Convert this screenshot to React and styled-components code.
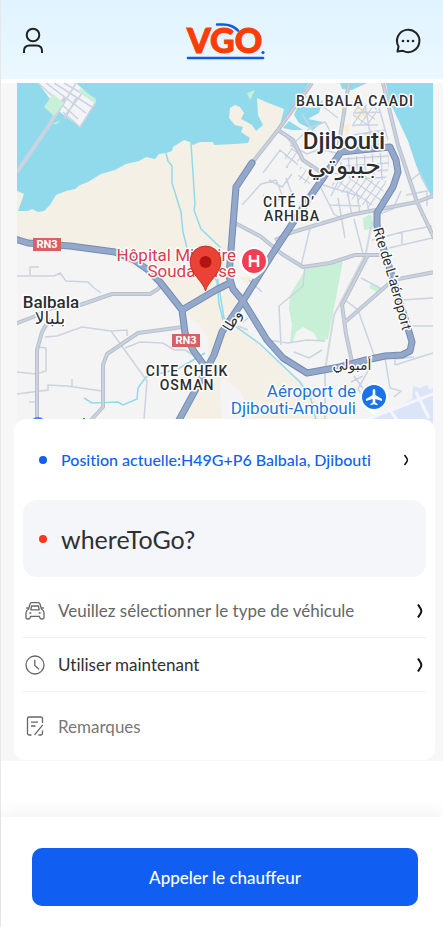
import { styled, createGlobalStyle } from 'styled-components';

const App = () => {
  return (
    <Page>
      <GlobalStyle />
      <Header>
        <IconButton aria-label="Profil">
          <UserIcon />
        </IconButton>
        <Logo />
        <IconButton aria-label="Messages">
          <ChatIcon />
        </IconButton>
      </Header>
      <Main>
        <CityMap />
        <Card>
          <LocationRow>
            <Dot $color="#105ff2" />
            <LocationText>
              Position actuelle:H49G+P6 Balbala, Djibouti
            </LocationText>
            <Chevron $thin viewBox="0 0 8 14">
              <path d="M2.5 2 L5 5.5 Q5.8 7 5 8.5 L2.5 12" />
            </Chevron>
          </LocationRow>
          <Destination>
            <Dot $color="#f9381c" />
            whereToGo?
          </Destination>
          <OptionRow $muted>
            <CarIcon />
            <OptionText>Veuillez sélectionner le type de véhicule</OptionText>
            <Chevron viewBox="0 0 8 14">
              <path d="M2 0.5 L4.8 5 Q5.8 7 4.8 9 L2 13.5" />
            </Chevron>
          </OptionRow>
          <OptionRow>
            <ClockIcon />
            <OptionText>Utiliser maintenant</OptionText>
            <Chevron viewBox="0 0 8 14">
              <path d="M2 0.5 L4.8 5 Q5.8 7 4.8 9 L2 13.5" />
            </Chevron>
          </OptionRow>
          <RemarkRow>
            <NoteIcon />
            <RemarkInput placeholder="Remarques" aria-label="Remarques" />
          </RemarkRow>
        </Card>
      </Main>
      <Footer>
        <CallButton>Appeler le chauffeur</CallButton>
      </Footer>
    </Page>
  );
};

export default App;

const Logo = () => (
  <LogoSvg viewBox="0 0 80 40" role="img" aria-label="VGO">
    <text x="1" y="32">
      VGO
    </text>
    <path d="M31 3.5 H37 Q46 3.5 52 9.5" strokeWidth="2.5" />
    <path d="M2 37 H77" strokeWidth="2.6" />
    <circle cx="77" cy="31.5" r="1.6" />
  </LogoSvg>
);

const UserIcon = () => (
  <LineIcon viewBox="0 0 28 28" $size={28} $color="#222" $stroke={2}>
    <circle cx="14" cy="8" r="6.3" />
    <path d="M5 26 V24 Q5 18.5 10.5 18.5 H17.5 Q23 18.5 23 24 V26" />
  </LineIcon>
);

const ChatIcon = () => (
  <LineIcon viewBox="0 0 28 28" $size={28} $color="#222" $stroke={2}>
    <path d="M3.5 24.5 L4.5 19.5 A11.2 11.2 0 1 1 9 23.8 Z" />
    <g fill="#222" stroke="none">
      <circle cx="9" cy="14" r="1.3" />
      <circle cx="14" cy="14" r="1.3" />
      <circle cx="19" cy="14" r="1.3" />
    </g>
  </LineIcon>
);

const CarIcon = () => (
  <LineIcon viewBox="0 0 20 20" $size={20} $color="#666" $stroke={1.3}>
    <path d="M3.6 8 L5 3 Q5.3 1.6 6.6 1.6 H13.4 Q14.7 1.6 15 3 L16.4 8 Q19 9.5 19 12 V16.5 Q19 18 17.5 18 H16.5 Q15.3 18 15 17 L14.4 15.3 H5.6 L5 17 Q4.7 18 3.5 18 H2.5 Q1 18 1 16.5 V12 Q1 9.5 3.6 8 Z" />
    <path d="M5.8 8.8 L6.6 5 H13.4 L14.2 8.8 Z M3.6 7 H1.2 M16.4 7 H18.8 M4.3 12 H6.3 M13.7 12 H15.7" />
  </LineIcon>
);

const ClockIcon = () => (
  <LineIcon viewBox="0 0 20 20" $size={20} $color="#666" $stroke={1.3}>
    <circle cx="10" cy="10" r="9" />
    <path d="M9.8 4.8 V10.5 L14 14.3" />
  </LineIcon>
);

const NoteIcon = () => (
  <LineIcon viewBox="0 0 20 20" $size={20} $color="#666" $stroke={1.3}>
    <path d="M17.5 7 V2.5 Q17.5 1 16 1 H4 Q2.5 1 2.5 2.5 V17.5 Q2.5 19 4 19 H6.5 M6 6.2 H13 M6 10 H10.5" />
    <path d="M9.5 18.8 L17.8 8.8 M13.5 19 H16 Q17.5 19 17.5 17.5 V14.5" />
  </LineIcon>
);

const MAIN_ROADS =
  'M15 239 L28 243 L70 246 L115 252 L134 260 L148 270 L160 282 L182 310 L185 333 L193 350 L206 368 M252 163 L236 187 L231 250 L229 276 L233 289 L243 301 M341 152 L312 194 L273 253 L243 301 L222 332 L214 355 L203 376 L178 422 M182 310 L216 290 L230 283 M243 301 L267 340 L283 358 L307 373 L340 367 L366 360 L385 356 L402 355 L410 351 L412 342 L407 325 L384 250 L377 225 L377 213 L393 187 L398 172 L396 160 L390 147 L380 148 L341 152';

const SIDE_ROADS =
  'M312 83 L278 130 L252 163 M278 130 L293 140 L303 160 L325 175 M383 83 L398 145 L417 202 L435 240 M349 83 L345 106 L338 150 M275 240 L293 232 L350 215 L417 202 L435 195 M233 222 L260 236 L282 254 L303 267 L330 263 L355 255 L380 255 M368 255 L342 305 L346 334 L352 362 M345 322 L393 280 L435 272 M15 324 L33 317 L52 308 L80 305 L112 294 L150 294 L158 289 L163 282 M37 422 V350 L42 332 L50 318 M91 420 L103 407 V365 L107 354 L138 333 L183 327';

const RAILWAY = 'M372 222 L366 253 L334 315 L325 370 V424';

const STREETS =
  'M17 276 H54 L60 273 L66 281 L88 282 L94 288 L101 293 M30 275 V267 H39 M45 337 L57 336 L82 327 L111 331 L147 381 L144 419 M111 331 L127 330 V336 M17 372 L36 374 L46 371 V348 L38 347 M17 394 L48 390 V385 L67 386 L102 391 M72 386 V379 M29 402 H37 M125 348 L140 342 L163 343 L174 350 L185 350 L202 361 M303 95 L325 108 L338 118 M292 145 L310 128 L325 122 L335 140 M302 114 L315 135 L331 148 M283 132 L305 162 M263 173 L280 150 L298 165 M269 180 L282 187 L292 174 M263 195 L273 202 L292 194 L286 178 M242 205 L261 184 L276 180 M276 180 L283 197 M290 145 L307 154 L320 149 L336 153 M317 180 L334 214 L340 218 M323 185 L362 197 M338 198 L345 238 M329 205 L361 206 M354 219 L363 254 M310 228 L301 266 M372 240 L402 232 L432 226 M389 248 L432 238 M402 232 V244 M401 191 L393 209 L377 215 M406 195 L427 191 L427 206 M410 181 L420 173 L427 188 M305 266 L303 286 L279 306 L281 345 M267 340 L288 343 L307 340 L325 341 M294 352 L309 358 L322 350 M361 278 L382 289 M345 300 L358 310 L374 355 M402 300 L433 298 M407 326 H433 M395 365 L433 353 M395 365 V359 L414 357 M369 369 L358 389 L370 408 M385 358 L390 388 L401 391 L394 397 M354 376 L364 390 M351 382 L363 376 M249 280 L262 292 M238 326 L248 330 M242 323 L248 318 M354 125 H378 M353 135 L385 130 M365 105 L373 149 M354 113 L380 112 M378 104 L388 140 M347 190 L352 216 M357 193 L360 214 M366 198 L369 211 M343 172 L331 196';

const LABELS = [
  { text: 'BALBALA CAADI', x: 355, y: 106, size: 14, spacing: 1 },
  { text: 'CITÉ D’', x: 289, y: 207, size: 14, spacing: 1 },
  { text: 'ARHIBA', x: 292, y: 221, size: 14, spacing: 1 },
  { text: 'CITE CHEIK', x: 187, y: 376, size: 14, spacing: 1 },
  { text: 'OSMAN', x: 187, y: 390, size: 14, spacing: 1 },
  { text: 'Djibouti', x: 344, y: 149, size: 24 },
  { text: 'Balbala', x: 51, y: 308, size: 17 },
];

const ARABIC_LABELS = [
  { text: 'جيبوتي', x: 344, y: 174, size: 26 },
  { text: 'بلبالا', x: 50, y: 324, size: 17 },
  { text: 'أمبولي', x: 352, y: 370, size: 14 },
];

const CityMap = () => (
  <MapSvg
    viewBox="17 83 416 341"
    preserveAspectRatio="xMidYMid slice"
    role="img"
    aria-label="Carte de Djibouti"
  >
    <defs>
      <pattern
        id="blocks"
        width="8"
        height="7"
        patternUnits="userSpaceOnUse"
        patternTransform="rotate(-4)"
      >
        <path d="M0 0 H8 M0 0 V7" stroke="#bfcada" strokeWidth="2.5" />
      </pattern>
      <pattern
        id="blocksTilted"
        width="9"
        height="6"
        patternUnits="userSpaceOnUse"
        patternTransform="rotate(-55)"
      >
        <path d="M0 0 H9 M0 0 V6" stroke="#c3cedd" strokeWidth="2" />
      </pattern>
      <path id="airportRoad" d="M373 229 C379 250 383 262 388 278 L405 340" />
    </defs>

    <rect x="17" y="83" width="416" height="341" fill="#90daec" />
    <path
      fill="#f4f0e5"
      d="M17 191 L24 194 L18 211 H28 L32 209 L38 212 L44 211 L50 205 L56 195 L66 191 L75 189 L80 185 L88 182 L101 174 L115 170 L126 164 L139 161 L146 157 L155 159 L159 154 L166 153 L172 151 L173 147 L184 140 L190 142 L193 145 L200 142 L213 142 L214 145 L235 144 L248 143 L250 138 L241 132 L243 127 L235 125 L229 118 L230 108 L235 105 L240 107 L244 113 L241 119 L252 125 L256 131 L263 125 L258 115 L257 98 L266 102 L284 109 L280 125 L290 150 L345 424 H17 Z"
    />
    <path
      fill="#f4f4f4"
      d="M309 83 H386 L389 100 L408 141 L415 162 L421 178 L433 199 V424 H333 L302 382 L280 363 L240 324 L243 301 L230 283 L236 187 L252 163 L278 130 Z M17 244 L115 256 L135 268 H145 L182 310 L200 325 L209 340 L206 368 L182 424 H17 Z M222 378 L240 390 L255 424 H222 L220 390 Z"
    />
    <path
      fill="#90daec"
      d="M294 115 L298 106 L311 108 L323 100 L319 113 L308 119 L323 122 L313 130 L299 123 Z M289 121 L303 130 L292 130 L283 128 Z M340 83 H367 L352 90 L342 89 Z"
    />

    <g fill="#f2f4f7" stroke="#cbd3e0" strokeWidth="1.5">
      <path d="M38 83 H76 L96 101 L80 127 L60 112 Z" stroke="none" />
      <path
        fill="none"
        d="M38 83 L78 119 M46 83 L86 113 M54 83 L92 107 M64 83 L95 101 M76 83 L55 118 M63 112 L80 127 L96 102 M65 119 L76 98 M83 92 L64 117"
      />
      <path d="M65 98 L48 127 L17 172" fill="none" strokeWidth="4" />
    </g>
    <g fill="#c7f0d6">
      <path d="M53 94 L64 103 L54 116 L44 107 Z M80 88 L96 99 L94 103 L79 92 Z M52 124 L61 120 L57 124 Z M247 93 L255 90 L250 100 Z" />
      <path d="M307 267 L343 261 L328 339 L318 341 L314 333 L303 327 L296 332 L293 342 H290 L292 325 L289 308 L290 295 Z" />
      <path d="M363 218 L371 214 L375 229 L364 230 Z M371 284 L382 289 L377 292 L369 288 Z" />
    </g>
    <path
      fill="#fbe7bd"
      d="M354 108 H366 V117 L356 118 Z M343 125 L350 124 L347 138 Z M240 278 L252 276 L248 284 Z"
      opacity="0.6"
    />
    <path
      fill="#dce5f8"
      d="M348 424 L395 408 L433 388 V424 Z M413 386 L420 388 L427 385 L431 393 L420 407 L412 397 Z"
    />
    <path
      d="M355 424 L433 394 M390 410 L400 424 M416 392 L429 418"
      stroke="#f4f6fc"
      strokeWidth="3"
    />

    <g fill="none" stroke="#90daec" strokeWidth="1.5">
      <path d="M166 153 L168 161 L172 166 L172 183 L181 212 L183 232 L187 248 L205 258 L217 282 L219 304 L223 320" />
      <path d="M191 143 L195 204 L194 210 L201 229 L221 248 M217 275 L224 318 L260 344 L300 382 L311 399 L317 424" />
      <path d="M84 398 L92 403 L118 402 L123 405 L137 399 L138 388 L146 377 L178 369 L205 353" />
    </g>

    <path fill="url(#blocks)" d="M343 158 L388 152 L389 166 L386 180 L350 179 L334 174 Z" />
    <path fill="url(#blocksTilted)" d="M341 177 L386 181 L381 200 L367 208 L345 195 L329 184 Z" />
    <path fill="url(#blocksTilted)" d="M284 151 L298 146 L300 160 L286 169 Z M300 166 L316 177 L308 186 L298 179 Z M354 103 L378 106 L374 124 L352 127 Z M364 130 L386 131 L385 145 L366 147 Z" />
    <path d={STREETS} fill="none" stroke="#cad4e1" strokeWidth="1.5" />
    <path d={RAILWAY} fill="none" stroke="#d5d9df" strokeWidth="2" />
    <path d={SIDE_ROADS} fill="none" stroke="#b6c0ce" strokeWidth="4" strokeLinejoin="round" />
    <path d={SIDE_ROADS} fill="none" stroke="#cbd2dd" strokeWidth="2" strokeLinejoin="round" />
    <path d={MAIN_ROADS} fill="none" stroke="#738bb6" strokeWidth="7" strokeLinejoin="round" strokeLinecap="round" />
    <path d={MAIN_ROADS} fill="none" stroke="#94a8ca" strokeWidth="5" strokeLinejoin="round" strokeLinecap="round" />

    {[
      [33, 238],
      [172, 334],
    ].map(([x, y]) => (
      <g key={x}>
        <rect x={x} y={y} width="28" height="13" fill="#d95f63" />
        <ShieldLabel x={x + 14} y={y + 10}>
          RN3
        </ShieldLabel>
      </g>
    ))}
    {LABELS.map(({ text, x, y, size, spacing }) => (
      <MapLabel key={text} x={x} y={y} $size={size} $spacing={spacing}>
        {text}
      </MapLabel>
    ))}
    {ARABIC_LABELS.map(({ text, x, y, size }) => (
      <ArabicLabel key={text} x={x} y={y} $size={size}>
        {text}
      </ArabicLabel>
    ))}
    <ArabicLabel x="233" y="325" $size={14} transform="rotate(-58 233 321)">
      وطا
    </ArabicLabel>
    <RoadLabel>
      <textPath href="#airportRoad">Rte de L’aéroport</textPath>
    </RoadLabel>
    <PlaceLabel x="236" y="261" $color="#dc3b4b">
      Hôpital Militaire
    </PlaceLabel>
    <PlaceLabel x="236" y="277" $color="#dc3b4b">
      Soudanaise
    </PlaceLabel>
    <PlaceLabel x="356" y="397" $color="#1d72d8">
      Aéroport de
    </PlaceLabel>
    <PlaceLabel x="356" y="414" $color="#1d72d8">
      Djibouti-Ambouli
    </PlaceLabel>

    <path fill="#fff" d="M254 279 L245 272 A14 14 0 1 1 263 272 Z" />
    <circle cx="254" cy="261" r="12" fill="#f43d52" />
    <path d="M250 255 V267 M258 255 V267 M250 261 H258" stroke="#fff" strokeWidth="2.5" />
    <path fill="#fff" d="M374 415 L364 407 A14 14 0 1 1 384 407 Z" />
    <circle cx="374" cy="397" r="12" fill="#1a73e8" />
    <path
      fill="#fff"
      d="M374 389 Q375.3 389 375.3 391 V395 L382 399 V401 L375.3 399 V402.5 L377.5 404 V405.3 L374 404.3 L370.5 405.3 V404 L372.7 402.5 V399 L366 401 V399 L372.7 395 V391 Q372.7 389 374 389 Z"
    />
    <path
      fill="#ea4335"
      stroke="#b3261e"
      strokeWidth="0.8"
      d="M205.5 291 C203 281 190 274 190 261.5 A15.5 15.5 0 0 1 221 261.5 C221 274 208 281 205.5 291 Z"
    />
    <circle cx="205.5" cy="262" r="6" fill="#b31412" />
    <circle cx="38" cy="425" r="8" fill="#4285f4" />
    <path d="M83 418 H85 V424 H83 Z" fill="#1e9a47" />
  </MapSvg>
);

const GlobalStyle = createGlobalStyle`
  * {
    box-sizing: border-box;
  }

  body {
    margin: 0;
    font-family: Lato, 'Noto Sans', sans-serif;
    background: #fff;
  }

  button, input {
    font: inherit;
    padding: 0;
    border: 0;
    background: none;
  }
`;

const Page = styled.div`
  display: flex;
  flex-direction: column;
  min-height: 100vh;
  border-left: 1px solid #e6e8ea;
`;

const Header = styled.header`
  display: flex;
  align-items: center;
  justify-content: space-between;
  height: 79px;
  padding: 3px 21px 0 18px;
  background: linear-gradient(#e0f3ff, #ebf8ff);
`;

const IconButton = styled.button`
  display: flex;
  cursor: pointer;
`;

const LogoSvg = styled.svg`
  width: 80px;
  height: 40px;
  margin-left: 10px;
  overflow: visible;
  fill: none;
  stroke: #0f5be8;
  stroke-linecap: round;

  text {
    font-family: Lato, sans-serif;
    font-size: 34px;
    font-weight: 900;
    fill: #fb3c05;
    stroke: #fb3c05;
    stroke-width: 1px;
  }

  circle {
    fill: #0f5be8;
    stroke: none;
  }
`;

const LineIcon = styled.svg`
  flex-shrink: 0;
  width: ${({ $size }) => $size}px;
  height: ${({ $size }) => $size}px;
  fill: none;
  stroke: ${({ $color }) => $color};
  stroke-width: ${({ $stroke }) => $stroke};
  stroke-linejoin: round;
`;

const Main = styled.main`
  margin-top: 4px;
  padding: 0 8px 1px 13px;
  background: #f7f7f7;
`;

const MapSvg = styled.svg`
  display: block;
  width: calc(100% - 5px);
  height: 341px;
  margin: 0 2px 0 3px;
`;

const MapLabel = styled.text`
  font-family: Roboto, sans-serif;
  font-size: ${({ $size }) => $size}px;
  font-weight: 500;
  letter-spacing: ${({ $spacing }) => $spacing || 0}px;
  text-anchor: middle;
  fill: #2b2d30;
  stroke: #fff;
  stroke-width: 3px;
  stroke-linejoin: round;
  paint-order: stroke;
`;

const ArabicLabel = styled(MapLabel)`
  font-family: 'DejaVu Sans', sans-serif;
  font-weight: 400;
`;

const RoadLabel = styled(MapLabel)`
  font-size: 14px;
  font-weight: 400;
  text-anchor: start;
`;

const PlaceLabel = styled(MapLabel)`
  font-size: 17px;
  font-weight: 400;
  text-anchor: end;
  fill: ${({ $color }) => $color};
`;

const ShieldLabel = styled.text`
  font-family: Roboto, sans-serif;
  font-size: 11px;
  font-weight: 700;
  text-anchor: middle;
  fill: #fff;
`;

const Card = styled.section`
  position: relative;
  margin-top: -5px;
  padding: 0 9px;
  border-radius: 12px;
  background: #fff;
  font-variant-ligatures: none;
`;

const LocationRow = styled.button`
  display: flex;
  align-items: center;
  width: 100%;
  height: 81px;
  padding: 0 16px;
  color: #105ff2;
  font-variant-ligatures: none;
  text-align: left;
  cursor: pointer;
`;

const Dot = styled.span`
  flex-shrink: 0;
  width: 8px;
  height: 8px;
  margin-right: 14px;
  border-radius: 50%;
  background: ${({ $color }) => $color};
`;

const LocationText = styled.span`
  flex: 1;
  font-size: 16px;
  font-weight: 500;
  white-space: nowrap;
`;

const Chevron = styled.svg`
  flex-shrink: 0;
  width: 8px;
  height: 14px;
  fill: none;
  stroke: #111;
  stroke-width: ${({ $thin }) => ($thin ? 1.5 : 2)};
`;

const Destination = styled.button`
  display: flex;
  align-items: center;
  width: 100%;
  height: 77px;
  margin-bottom: 7px;
  padding: 0 16px;
  border-radius: 14px;
  background: #f4f6fa;
  color: #303030;
  font-size: 25px;
  cursor: pointer;
`;

const OptionRow = styled.button`
  display: flex;
  align-items: center;
  gap: 13px;
  width: 100%;
  height: 54px;
  padding: 0 2px;
  border-bottom: 1px solid #f0f0f0;
  color: ${({ $muted }) => ($muted ? '#666' : '#303030')};
  font-size: 17px;
  font-variant-ligatures: none;
  text-align: left;
  cursor: pointer;
`;

const OptionText = styled.span`
  flex: 1;
`;

const RemarkRow = styled.label`
  display: flex;
  align-items: center;
  gap: 13px;
  height: 68px;
  padding: 0 2px;
`;

const RemarkInput = styled.input`
  flex: 1;
  min-width: 0;
  font-size: 17px;
  color: #303030;
  outline: none;

  &::placeholder {
    color: #777;
    opacity: 1;
  }
`;

const Footer = styled.footer`
  margin-top: auto;
  padding: 31px 25px 21px 31px;
  background: #fff;
  box-shadow: 0 -4px 16px rgba(0, 0, 0, 0.06);
`;

const CallButton = styled.button`
  width: 100%;
  height: 58px;
  border-radius: 10px;
  background: #105ff2;
  color: #fff;
  font-size: 17px;
  font-weight: 500;
  cursor: pointer;
`;
